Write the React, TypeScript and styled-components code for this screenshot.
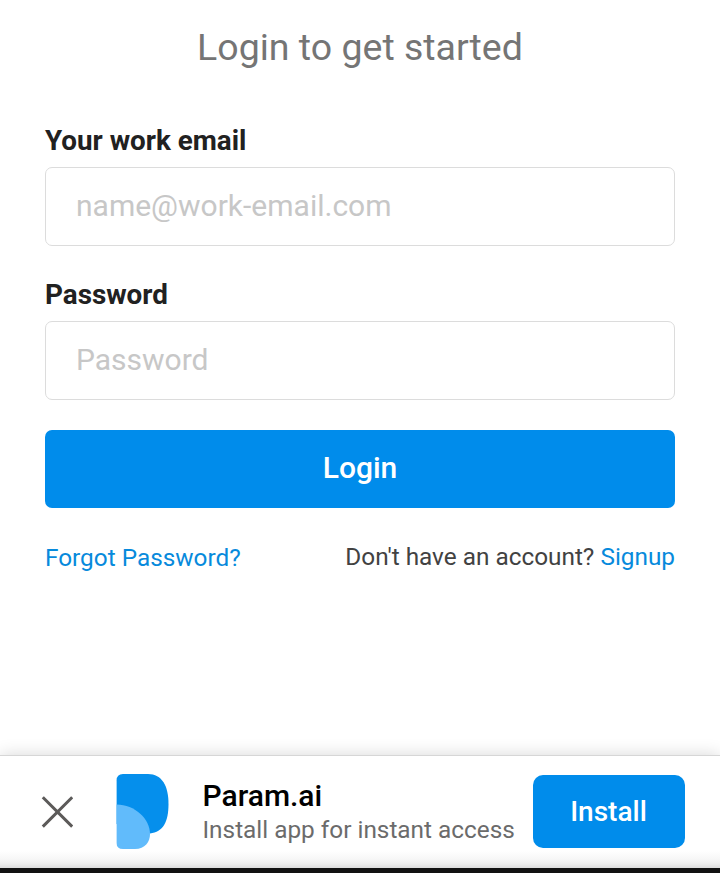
import React from "react";
import styled, { createGlobalStyle } from "styled-components";

const GlobalStyle = createGlobalStyle`
  * { box-sizing: border-box; }
  body { margin: 0; background: #fff; font-family: Roboto, sans-serif; overflow: hidden; }
`;

const Page = styled.div`
  display: flex;
  flex-direction: column;
  height: 873px;
  width: 720px;
`;

const Form = styled.form`
  flex: 1;
  padding: 0 45px;
  display: flex;
  flex-direction: column;
`;

const Heading = styled.h1`
  margin: 25px 0 0;
  height: 44px;
  line-height: 44px;
  font-size: 37.5px;
  font-weight: 400;
  text-align: center;
  color: #757575;
`;

const Field = styled.label<{ $gap: number }>`
  display: flex;
  flex-direction: column;
  margin-top: ${(p) => p.$gap}px;
`;

const Label = styled.span`
  height: 34px;
  line-height: 34px;
  margin-bottom: 9px;
  font-size: 27.8px;
  font-weight: 700;
  color: #212121;
`;

const Input = styled.input`
  height: 79px;
  padding: 0 30px 2px;
  border: 1px solid #dcdcdc;
  border-radius: 7px;
  font: 400 30px Roboto, sans-serif;
  outline: none;
  &::placeholder { color: #c7c7c7; opacity: 1; }
`;

const Submit = styled.button`
  height: 78px;
  margin-top: 30px;
  padding: 0 0 4px;
  border: 0;
  border-radius: 7px;
  background: #008ceb;
  color: #fff;
  font: 500 30px Roboto, sans-serif;
`;

const Links = styled.div`
  display: flex;
  justify-content: space-between;
  margin-top: 34px;
  font-size: 24.35px;
  line-height: 30px;
  color: #424242;
`;

const Link = styled.a`
  color: #078adc;
`;

const ForgotLink = styled(Link)`
  padding-top: 1px;
`;

const Banner = styled.aside`
  display: flex;
  align-items: center;
  height: 113px;
  padding: 0 35px 0 41px;
  border-top: 1px solid #d6d6d6;
  background: linear-gradient(to top, #dcdcdc 0, #ececec 4px, #f7f7f7 9px, #fff 17px);
  box-shadow: 0 0 16px rgba(0, 0, 0, 0.16);
`;

const CloseIcon = styled.svg`
  width: 32px;
  height: 32px;
  margin-bottom: 1px;
  flex: none;
`;

const Logo = styled.svg`
  width: 54px;
  height: 76px;
  margin-left: 43px;
  flex: none;
`;

const AppInfo = styled.div`
  flex: 1;
  margin: 2px 0 0 32.5px;
  white-space: nowrap;
`;

const AppName = styled.div`
  font-size: 30px;
  font-weight: 500;
  line-height: 34px;
  color: #000;
`;

const AppNote = styled.div`
  font-size: 24.35px;
  line-height: 34px;
  color: #6b6b6b;
`;

const Install = styled.button`
  width: 152px;
  height: 73px;
  margin-bottom: 2px;
  padding: 0 1px 0 0;
  border: 0;
  border-radius: 10px;
  background: #008ceb;
  color: #fff;
  font: 500 28px Roboto, sans-serif;
`;

const SystemBar = styled.div`
  height: 5px;
  background: #111;
  position: relative;
`;

export default function App() {
  return (
    <Page>
      <GlobalStyle />
      <Form>
        <Heading>Login to get started</Heading>
        <Field $gap={55}>
          <Label>Your work email</Label>
          <Input type="email" placeholder="name@work-email.com" />
        </Field>
        <Field $gap={32}>
          <Label>Password</Label>
          <Input type="password" placeholder="Password" />
        </Field>
        <Submit type="button">Login</Submit>
        <Links>
          <ForgotLink>Forgot Password?</ForgotLink>
          <span>Don't have an account? <Link>Signup</Link></span>
        </Links>
      </Form>
      <Banner>
        <CloseIcon viewBox="0 0 32 32">
          <path d="M1.8 1.2 31.2 30.6M31.2 1.2 1.8 30.6" stroke="#5c5a59" strokeWidth="3" />
        </CloseIcon>
        <Logo viewBox="0 0 54 76">
          <path d="M7 0H32C46 0 52.5 12 52.5 30C52.5 48 47 58 34 59.5L.6 50V6.5Q.6 0 7 0Z" fill="#058fec" />
          <path d="M.6 30.5C19 30.5 34 45 34 60C34 68 29 75 19 75H7Q.6 75 .6 69Z" fill="#61bbfb" />
        </Logo>
        <AppInfo>
          <AppName>Param.ai</AppName>
          <AppNote>Install app for instant access</AppNote>
        </AppInfo>
        <Install type="button">Install</Install>
      </Banner>
      <SystemBar />
    </Page>
  );
}
